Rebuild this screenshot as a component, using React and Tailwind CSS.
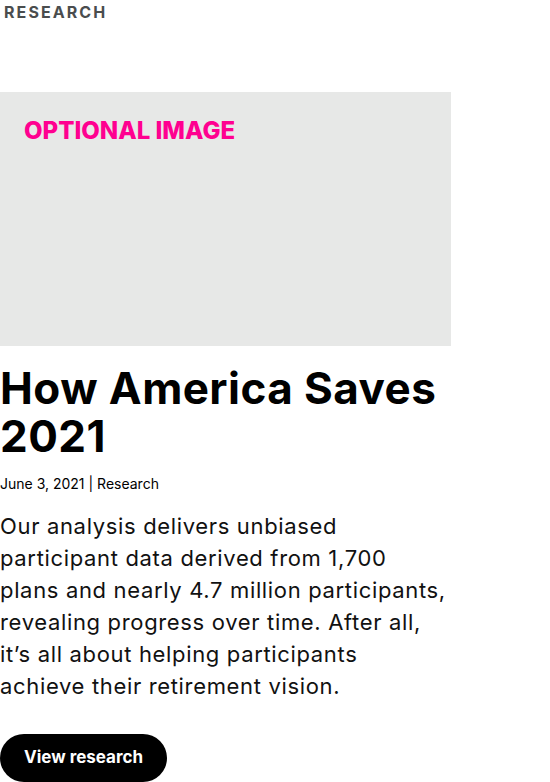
export default function App() {
  return (
    <div className="w-[451px] bg-white font-['Inter',sans-serif] text-black">
      <div className="pl-1 pt-[3px] text-[16px] font-bold leading-[18px] tracking-[0.13em] text-[#4a4d4e]">
        RESEARCH
      </div>

      <div className="mt-[71px] h-[254px] bg-[#e7e8e7] px-6 pt-[25px]">
        <div className="text-[24px] font-extrabold leading-[28px] tracking-[0em] text-[#ff0090]">
          OPTIONAL IMAGE
        </div>
      </div>

      <h1 className="mt-[18px] text-[44px] font-bold leading-[48px] tracking-[0.01em]">
        How America Saves 2021
      </h1>

      <div className="mt-[14px] text-[14px] leading-[20px]">June 3, 2021 | Research</div>

      <p className="mt-[16px] text-[22px] font-normal leading-[32px] tracking-[0.03em] text-[#111]">
        Our analysis delivers unbiased
        <br />
        participant data derived from 1,700
        <br />
        plans and nearly 4.7 million participants,
        <br />
        revealing progress over time. After all,
        <br />
        it’s all about helping participants
        <br />
        achieve their retirement vision.
      </p>

      <button className="mt-[32px] h-[48px] rounded-full bg-black px-6 text-[17px] font-bold text-white">
        View research
      </button>
    </div>
  );
}
